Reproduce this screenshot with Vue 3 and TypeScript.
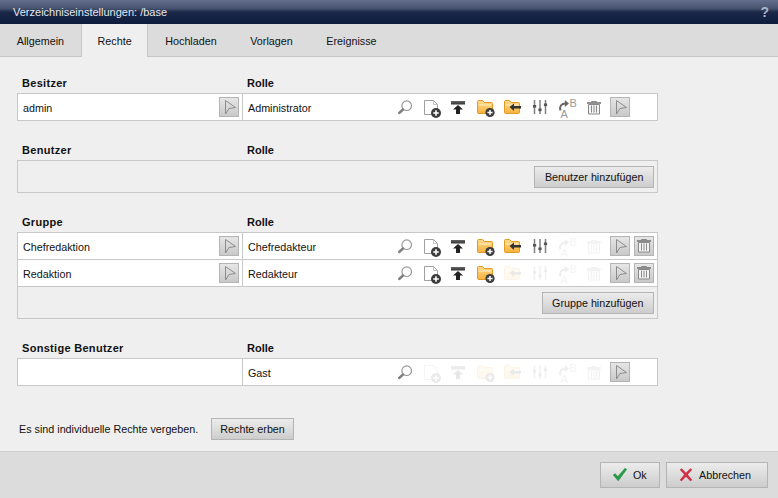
<script setup lang="ts">
type IconName = 'search' | 'doc' | 'up' | 'folderAdd' | 'folderIn' | 'mixer' | 'ab' | 'trash'

interface Row {
  name: string
  pick: boolean
  role: string
  off: IconName[]
  remove: boolean
}

interface Section {
  head: string
  rows: Row[]
  action?: string
}

const order: IconName[] = ['search', 'doc', 'up', 'folderAdd', 'folderIn', 'mixer', 'ab', 'trash']
const tabs = ['Allgemein', 'Rechte', 'Hochladen', 'Vorlagen', 'Ereignisse']

const sections: Section[] = [
  { head: 'Besitzer', rows: [{ name: 'admin', pick: true, role: 'Administrator', off: [], remove: false }] },
  { head: 'Benutzer', rows: [], action: 'Benutzer hinzufügen' },
  {
    head: 'Gruppe',
    rows: [
      { name: 'Chefredaktion', pick: true, role: 'Chefredakteur', off: ['ab', 'trash'], remove: true },
      { name: 'Redaktion', pick: true, role: 'Redakteur', off: ['folderIn', 'mixer', 'ab', 'trash'], remove: true },
    ],
    action: 'Gruppe hinzufügen',
  },
  {
    head: 'Sonstige Benutzer',
    rows: [{ name: '', pick: false, role: 'Gast', off: ['doc', 'up', 'folderAdd', 'folderIn', 'mixer', 'ab', 'trash'], remove: false }],
  },
]
</script>

<template>
  <div class="dialog">
    <svg class="sprite" width="0" height="0" aria-hidden="true">
      <defs>
        <linearGradient id="fold" x1="0" y1="0" x2="0" y2="1">
          <stop offset="0" stop-color="#ffd98a" />
          <stop offset="1" stop-color="#f6b23e" />
        </linearGradient>
        <linearGradient id="bar" x1="0" y1="0" x2="0" y2="1">
          <stop offset="0" stop-color="#666" />
          <stop offset="1" stop-color="#333" />
        </linearGradient>
        <symbol id="i-search" viewBox="0 0 24 24">
          <circle cx="13.7" cy="10.7" r="4.8" fill="#fff" stroke="#999" stroke-width="1.2" />
          <path d="M10 14.5 6.200 18" stroke="#808080" stroke-width="2.400" stroke-linecap="round" />
        </symbol>
        <symbol id="i-doc" viewBox="0 0 24 24">
          <path d="M4.500 5.500h9l4 4v10h-13z" fill="#fff" stroke="#a0a0a0" />
          <path d="M13.500 5.500v4h4" fill="none" stroke="#c4c4c4" />
          <circle cx="16" cy="18" r="5" fill="#3c3c3c" />
          <path d="M13.200 18h5.600M16 15.200v5.600" stroke="#fff" stroke-width="1.600" />
        </symbol>
        <symbol id="i-up" viewBox="0 0 24 24">
          <rect x="4" y="6" width="14" height="3.500" fill="url(#bar)" />
          <path d="M11 10 16 14.500h-3V19H9v-4.500H6z" fill="#222" />
        </symbol>
        <symbol id="i-folderAdd" viewBox="0 0 24 24">
          <path d="M3.500 6.500a1 1 0 0 1 1-1h4l2 2h7a1 1 0 0 1 1 1v9a1 1 0 0 1-1 1h-13a1 1 0 0 1-1-1z" fill="url(#fold)" stroke="#e39a25" />
          <path d="M4.500 10h13" stroke="#fff1cc" />
          <circle cx="16" cy="17.500" r="4.600" fill="#3c3c3c" />
          <path d="M13.400 17.500h5.200M16 14.900v5.200" stroke="#fff" stroke-width="1.500" />
        </symbol>
        <symbol id="i-folderIn" viewBox="0 0 24 24">
          <path d="M3.500 6.500a1 1 0 0 1 1-1h4l2 2h7a1 1 0 0 1 1 1v9a1 1 0 0 1-1 1h-13a1 1 0 0 1-1-1z" fill="url(#fold)" stroke="#e39a25" />
          <path d="M4.500 10h13" stroke="#fff1cc" />
          <path d="M8.500 12 13 8.500V11h7v2.500h-7V16z" fill="#333" />
        </symbol>
        <symbol id="i-mixer" viewBox="0 0 24 24">
          <path d="M6.500 5v14M12 5v14M17.500 5v14" stroke="#808080" stroke-width="1.500" />
          <rect x="5" y="10" width="3.200" height="2.600" fill="#555" />
          <rect x="10.400" y="13.500" width="3.200" height="2.600" fill="#555" />
          <rect x="15.900" y="8.500" width="3.200" height="2.600" fill="#555" />
        </symbol>
        <symbol id="i-ab" viewBox="0 0 24 24">
          <path d="M5.500 15.500C4 11.500 6.500 8.500 10.500 8.500" fill="none" stroke="#666" stroke-width="2" />
          <path d="M9.800 5 14 8.500 9.800 12z" fill="#666" />
          <text x="14.500" y="12" font-family="'Liberation Sans', sans-serif" font-size="11" fill="#999">B</text>
          <text x="5.500" y="23" font-family="'Liberation Sans', sans-serif" font-size="11" fill="#999">A</text>
        </symbol>
        <symbol id="i-trash" viewBox="0 0 24 24">
          <path d="M5 8h14" stroke="#777" stroke-width="1.600" />
          <path d="M9.500 8V6.500h5V8" fill="none" stroke="#888" />
          <path d="M6.500 9.500h11V19h-11z" fill="#f4f4f4" stroke="#888" />
          <path d="M9.500 10.500v7M12 10.500v7M14.500 10.500v7" stroke="#888" />
        </symbol>
        <symbol id="i-pointer" viewBox="0 0 20 20">
          <path d="M6.500 3.500 16.500 10.500 10 11.500 6.500 17z" fill="none" stroke="#8c8c8c" />
        </symbol>
      </defs>
    </svg>

    <header class="title">
      <span>Verzeichniseinstellungen: /base</span>
      <b class="help">?</b>
    </header>

    <nav class="tabs">
      <div v-for="t in tabs" :key="t" class="tab" :class="{ active: t === 'Rechte' }">{{ t }}</div>
    </nav>

    <main class="main">
      <section v-for="s in sections" :key="s.head" class="section">
        <div class="heads">
          <strong class="head-a">{{ s.head }}</strong>
          <strong class="head-b">Rolle</strong>
        </div>
        <div class="box">
          <div v-for="r in s.rows" :key="r.role" class="row">
            <div class="who">
              <span class="grow">{{ r.name }}</span>
              <button v-if="r.pick" class="square" type="button" aria-label="Auswählen">
                <svg width="20" height="20"><use href="#i-pointer" /></svg>
              </button>
            </div>
            <div class="role">
              <span class="role-name">{{ r.role }}</span>
              <svg
                v-for="ic in order"
                :key="ic"
                class="ic"
                :class="{ off: r.off.includes(ic) }"
                width="24"
                height="24"
              >
                <use :href="`#i-${ic}`" />
              </svg>
              <button class="square first" type="button" aria-label="Rechte">
                <svg width="20" height="20"><use href="#i-pointer" /></svg>
              </button>
              <button class="square del" :class="{ gone: !r.remove }" type="button" aria-label="Entfernen">
                <svg width="20" height="20" viewBox="2 3 20 20"><use href="#i-trash" width="24" height="24" /></svg>
              </button>
            </div>
          </div>
          <div v-if="s.action" class="actions">
            <button class="btn" type="button">{{ s.action }}</button>
          </div>
        </div>
      </section>

      <div class="inherit">
        <span>Es sind individuelle Rechte vergeben.</span>
        <button class="btn" type="button">Rechte erben</button>
      </div>
    </main>

    <footer class="footer">
      <button class="btn big ok" type="button">
        <svg width="16" height="16" viewBox="1 2 18 18"><path d="M2 11l2.500-2 3 3.500L15.500 3 18 4.500 8 18z" fill="#2a9a4a" /></svg>
        Ok
      </button>
      <button class="btn big cancel" type="button">
        <svg width="16" height="16" viewBox="2 1.500 16 18"><path d="M3 4.500 5 3l5 5 5-5 2 1.500L12 10l5 6-2 1.500-5-5-5 5L3 16l5-6z" fill="#cf3048" /></svg>
        Abbrechen
      </button>
    </footer>
  </div>
</template>

<style scoped>
.dialog {
  width: 778px;
  height: 498px;
  display: flex;
  flex-direction: column;
  background: #efefef;
  color: #111;
  font: 10.75px "Liberation Sans", Arial, sans-serif;
  overflow: hidden;
}
.sprite {
  position: absolute;
}
.title {
  height: 24px;
  flex: none;
  display: flex;
  align-items: center;
  justify-content: space-between;
  padding: 0 9px 0 13px;
  font-size: 11px;
  color: #e4e8f0;
  background: linear-gradient(#636f8c 0, #475470 35%, #1b2848 50%, #0d1b3d 100%);
}
.help {
  font-size: 14px;
  color: #aab4c8;
}
.tabs {
  height: 33px;
  flex: none;
  box-sizing: border-box;
  display: flex;
  background: #dcdcdc;
  border-bottom: 1px solid #c6c6c6;
}
.tab {
  height: 33px;
  box-sizing: border-box;
  padding: 0 15.8px;
  border: 1px solid transparent;
  border-width: 0 1px;
  display: flex;
  align-items: center;
}
.tab.active {
  background: #efefef;
  border-color: #c6c6c6;
}
.main {
  flex: 1;
  padding: 20px 0 0 17px;
}
.section {
  width: 641px;
  margin-bottom: 23px;
}
.heads {
  height: 16px;
  display: flex;
  align-items: flex-start;
  font-size: 11px;
  font-weight: bold;
  line-height: 13px;
}
.head-a {
  width: 230px;
  padding-left: 5px;
  box-sizing: border-box;
  letter-spacing: 0.3px;
}
.box {
  border: 1px solid #c8c8c8;
}
.row {
  height: 26px;
  display: flex;
  background: #fff;
  border-bottom: 1px solid #c8c8c8;
}
.row:last-child {
  border-bottom: 0;
}
.who {
  width: 225px;
  box-sizing: border-box;
  display: flex;
  align-items: center;
  padding: 0 3px 0 5px;
  border-right: 1px solid #c8c8c8;
}
.grow {
  flex: 1;
  padding-top: 1px;
}
.role {
  flex: 1;
  display: flex;
  align-items: center;
  padding-left: 5px;
}
.role-name {
  width: 144px;
  padding-top: 1px;
}
.ic {
  margin: 0 2px 0 1px;
  flex: none;
}
.ic.off {
  opacity: 0.1;
}
.square {
  width: 20px;
  height: 20px;
  padding: 0;
  flex: none;
  border: 1px solid #b4b4b4;
  background: linear-gradient(#e6e6e6, #c9c9c9);
  display: flex;
  align-items: center;
  justify-content: center;
}
.square svg {
  flex: none;
}
.square.first {
  margin-left: 2px;
}
.square.del {
  margin-left: 4px;
}
.square.gone {
  visibility: hidden;
}
.actions {
  height: 31px;
  box-sizing: border-box;
  display: flex;
  align-items: center;
  justify-content: flex-end;
  padding-right: 3px;
}
.btn {
  height: 22px;
  padding: 0 8px;
  border: 1px solid #b4b4b4;
  background: linear-gradient(#ececec, #cdcdcd);
  color: #111;
  font: inherit;
}
.actions .btn {
  padding: 0 9.5px;
}
.inherit {
  display: flex;
  align-items: center;
  gap: 13px;
  padding-left: 2px;
  margin-top: 32px;
}
.footer {
  height: 47px;
  flex: none;
  box-sizing: border-box;
  display: flex;
  align-items: center;
  justify-content: flex-end;
  gap: 6px;
  padding: 0 10px 0 0;
  background: #dcdcdc;
  border-top: 1px solid #cfcfcf;
}
.btn.big {
  height: 26px;
  display: flex;
  align-items: center;
  gap: 5px;
  padding-left: 11px;
}
.btn.ok {
  width: 60px;
}
.btn.cancel {
  width: 102px;
}
</style>
